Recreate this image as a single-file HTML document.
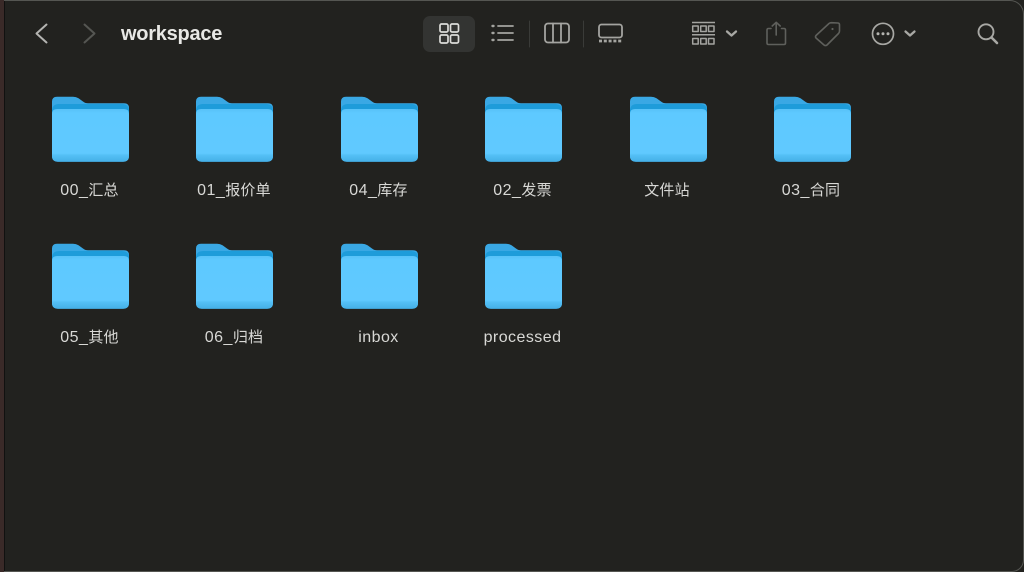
<!DOCTYPE html>
<html><head><meta charset="utf-8"><style>
html,body{margin:0;padding:0;background:#1a1a18}
#w{position:relative;width:1024px;height:572px;overflow:hidden;background:#22221f;font-family:"Liberation Sans","Noto Sans CJK SC",sans-serif;filter:blur(.3px)}
#frame{position:absolute;left:4px;top:0;width:1019px;height:570px;border:solid #555652;border-width:1px 1px 1px 0;border-radius:0 14px 12px 0;box-sizing:content-box}
#l1{position:absolute;left:0;top:0;width:4px;height:572px;background:#3a2a28}
#l2{position:absolute;left:4px;top:0;width:1px;height:572px;background:#111110}
.t{position:absolute;width:144px;text-align:center;color:#d8d8d5;font-size:16px;letter-spacing:.45px;line-height:20px;white-space:nowrap}
.t span{font-size:15px;letter-spacing:.2px}
.f{position:absolute;width:77px;height:66px}
svg.i{position:absolute;left:0;top:0}
#title{position:absolute;left:121px;top:22px;color:#e8e8e5;font-size:20px;line-height:24px;font-weight:bold;letter-spacing:-.25px}
#sel{position:absolute;left:423px;top:16px;width:52px;height:36px;border-radius:7px;background:#333432}
</style></head><body><div id="w">
<div id="l1"></div><div id="l2"></div><div id="frame"></div>
<div id="sel"></div>
<div id="title">workspace</div>
<svg class="i" width="1024" height="60" fill="none" stroke-linecap="round" stroke-linejoin="round">
<path d="M46.500 24.500L36.500 33.500L46.500 42.500" stroke="#b4b4b1" stroke-width="2"/>
<path d="M84.500 24.500L94.500 33.500L84.500 42.500" stroke="#555652" stroke-width="2"/>
<g stroke="#dcdcd9" stroke-width="1.700"><rect x="440" y="24" width="8" height="8" rx="1.500"/><rect x="450.500" y="24" width="8" height="8" rx="1.500"/><rect x="440" y="35" width="8" height="8" rx="1.500"/><rect x="450.500" y="35" width="8" height="8" rx="1.500"/></g>
<g stroke="#a4a4a0" stroke-width="1.800"><path d="M498 26H513M498 33H513M498 40H513"/><path d="M492.500 26h1M492.500 33h1M492.500 40h1" stroke-width="2.400"/></g>
<path d="M529.500 21V47M583.500 21V47" stroke="#3a3b38" stroke-width="1"/>
<g stroke="#a4a4a0" stroke-width="1.800"><rect x="545" y="23.500" width="24" height="19" rx="3"/><path d="M553 23.500V42.500M561 23.500V42.500"/></g>
<g stroke="#a4a4a0"><rect x="599" y="24.500" width="23" height="13" rx="2.500" stroke-width="1.800"/><path d="M599 41h23" stroke-width="2.800" stroke-dasharray="3 1.800" stroke-linecap="butt"/></g>
<g stroke="#a4a4a0" stroke-width="1.500" stroke-linecap="butt"><path d="M692 22.500H715M692 34.800H715"/><rect x="692.700" y="26" width="5.500" height="5.500"/><rect x="700.700" y="26" width="5.500" height="5.500"/><rect x="708.500" y="26" width="5.500" height="5.500"/><rect x="692.700" y="38.500" width="5.500" height="5.500"/><rect x="700.700" y="38.500" width="5.500" height="5.500"/><rect x="708.500" y="38.500" width="5.500" height="5.500"/></g>
<path d="M727 31.500L731.500 35.500L736 31.500" stroke="#a8a8a4" stroke-width="2.300"/>
<g stroke="#5f605c" stroke-width="1.600"><path d="M771 28.500H768.500Q767 28.500 767 30V43Q767 44.500 768.500 44.500H784Q785.500 44.500 785.500 43V30Q785.500 28.500 784 28.500H781.500"/><path d="M776.200 35V22.500M772.200 26L776.200 22.300L780.200 26"/></g>
<g stroke="#5f605c" stroke-width="1.600"><path d="M816 35.500L829 23.500Q830 22.700 831.500 22.700L838 23Q839.500 23.200 839.500 24.800V31Q839.500 32.500 838.500 33.500L827 45Q825.500 46.200 824 45L816 38Q815 36.700 816 35.500Z"/></g>
<circle cx="832.500" cy="29" r="1.100" fill="#5f605c"/>
<circle cx="883" cy="33.800" r="10.500" stroke="#a8a8a4" stroke-width="1.700"/>
<g fill="#b4b4b0"><circle cx="878" cy="33.800" r="1.500"/><circle cx="883" cy="33.800" r="1.500"/><circle cx="888" cy="33.800" r="1.500"/></g>
<path d="M905.500 31.500L910 35.500L914.500 31.500" stroke="#a8a8a4" stroke-width="2.300"/>
<circle cx="986" cy="31.800" r="7.500" stroke="#a8a8a4" stroke-width="1.900"/>
<path d="M991.500 37.500L997 43" stroke="#a8a8a4" stroke-width="2.600"/>
</svg>
<svg width="0" height="0" style="position:absolute"><defs>
<linearGradient id="g" x1="0" y1="0" x2="0" y2="1"><stop offset="0" stop-color="#58c2f8"/><stop offset=".08" stop-color="#5ec9ff"/><stop offset=".84" stop-color="#60c9ff"/><stop offset=".88" stop-color="#53bff5"/><stop offset="1" stop-color="#46b0e8"/></linearGradient>
<symbol id="folder" viewBox="0 0 77 66">
<path d="M0 60V5.500Q0 .700 5 .700H21Q24 .700 26.500 2.200L31 5.500Q33 7.300 36 7.300H72Q77 7.300 77 12V60Q77 65.700 71 65.700H6Q0 65.700 0 60Z" fill="#3aa8e4"/>
<path d="M0 15Q0 8 7 8H70Q77 8 77 15V20H0Z" fill="#1e9cda"/>
<path d="M0 18Q0 13 5 13H72Q77 13 77 18V60Q77 65.700 71 65.700H6Q0 65.700 0 60Z" fill="url(#g)"/>
</symbol></defs></svg>
<svg class="f" style="left:52px;top:96px"><use href="#folder" width="77" height="66"/></svg>
<svg class="f" style="left:196px;top:96px"><use href="#folder" width="77" height="66"/></svg>
<svg class="f" style="left:341px;top:96px"><use href="#folder" width="77" height="66"/></svg>
<svg class="f" style="left:485px;top:96px"><use href="#folder" width="77" height="66"/></svg>
<svg class="f" style="left:630px;top:96px"><use href="#folder" width="77" height="66"/></svg>
<svg class="f" style="left:774px;top:96px"><use href="#folder" width="77" height="66"/></svg>
<svg class="f" style="left:52px;top:243px"><use href="#folder" width="77" height="66"/></svg>
<svg class="f" style="left:196px;top:243px"><use href="#folder" width="77" height="66"/></svg>
<svg class="f" style="left:341px;top:243px"><use href="#folder" width="77" height="66"/></svg>
<svg class="f" style="left:485px;top:243px"><use href="#folder" width="77" height="66"/></svg>
<div class="t" style="left:17.500px;top:181px">00_<span>汇总</span></div>
<div class="t" style="left:162px;top:181px">01_<span>报价单</span></div>
<div class="t" style="left:306.500px;top:181px">04_<span>库存</span></div>
<div class="t" style="left:450.500px;top:181px">02_<span>发票</span></div>
<div class="t" style="left:595px;top:181px"><span>文件站</span></div>
<div class="t" style="left:739px;top:181px">03_<span>合同</span></div>
<div class="t" style="left:17.500px;top:328px">05_<span>其他</span></div>
<div class="t" style="left:162px;top:328px">06_<span>归档</span></div>
<div class="t" style="left:306.500px;top:328px">inbox</div>
<div class="t" style="left:450.500px;top:328px">processed</div>
</div></body></html>
